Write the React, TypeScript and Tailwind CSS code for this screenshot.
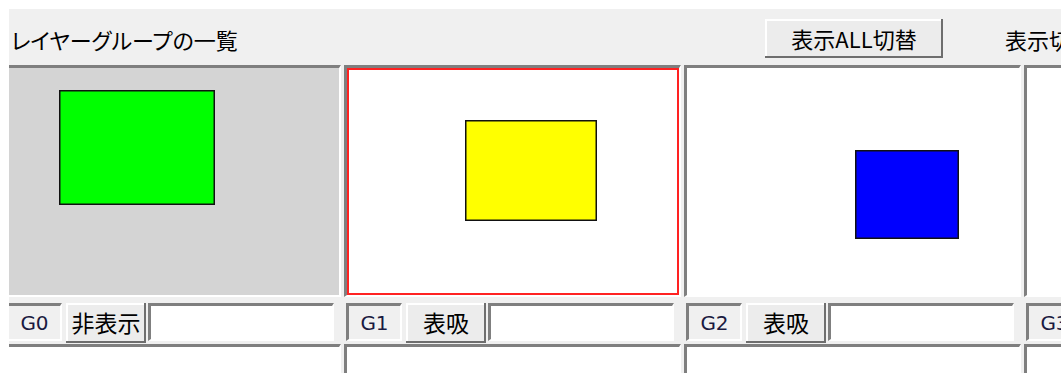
import React from "react";

interface LayerGroup {
  id: string;
  toggleLabel: string;
  bg: string;
  selected: boolean;
  shape: { x: number; y: number; w: number; h: number; fill: string };
}

const groups: LayerGroup[] = [
  {
    id: "G0",
    toggleLabel: "非表示",
    bg: "bg-[#d4d4d4]",
    selected: false,
    shape: { x: 52, y: 22, w: 156, h: 115, fill: "#00ff00" },
  },
  {
    id: "G1",
    toggleLabel: "表吸",
    bg: "bg-white",
    selected: true,
    shape: { x: 116, y: 50, w: 132, h: 101, fill: "#ffff00" },
  },
  {
    id: "G2",
    toggleLabel: "表吸",
    bg: "bg-white",
    selected: false,
    shape: { x: 168, y: 82, w: 104, h: 89, fill: "#0000ff" },
  },
  {
    id: "G3",
    toggleLabel: "表吸",
    bg: "bg-white",
    selected: false,
    shape: { x: 0, y: 0, w: 0, h: 0, fill: "none" },
  },
];

const jp = "font-['Noto_Sans_CJK_JP',sans-serif]";
const sunkenBorder =
  "border-t-[3px] border-l-[3px] border-b-2 border-r-2 border-t-[#7f7f7f] border-l-[#7f7f7f] border-b-white border-r-white";
const raised =
  "shadow-[inset_-2px_-2px_0_#6e6e6e,inset_2px_2px_0_#ffffff] bg-[#ececec]";

const GroupColumn: React.FC<{ group: LayerGroup }> = ({ group }) => {
  const { shape } = group;
  return (
    <div className="w-[337px] shrink-0 flex flex-col">
      {/* preview */}
      <div className={`h-[232px] ${sunkenBorder} ${group.bg}`}>
        <div
          className={`w-full h-full ${
            group.selected ? "border-2 border-[#ff2222]" : ""
          }`}
        >
          <svg className="block w-full h-full">
            {shape.w > 0 && (
              <rect
                x={shape.x + 0.75}
                y={shape.y + 0.75}
                width={shape.w - 1.5}
                height={shape.h - 1.5}
                fill={shape.fill}
                stroke="#111"
                strokeWidth={1.5}
              />
            )}
          </svg>
        </div>
      </div>

      {/* controls */}
      <div className="mt-[6px] h-[40px] flex items-start">
        <div
          className={`ml-[2px] w-[56px] h-[38px] shrink-0 ${sunkenBorder} border-b-[#f7f7f7] flex items-center justify-center font-['DejaVu_Sans',sans-serif] text-[20px] text-[#1a1a40]`}
        >
          {group.id}
        </div>
        <button
          className={`ml-[4px] w-[80px] h-[40px] shrink-0 ${raised} ${jp} text-[23px] leading-none text-black flex items-center justify-center pb-[2px]`}
        >
          {group.toggleLabel}
        </button>
        <input
          type="text"
          className={`ml-[2px] w-[186px] h-[38px] shrink-0 bg-white ${sunkenBorder} outline-none`}
        />
      </div>

      {/* next row */}
      <div className={`mt-[1px] h-[80px] bg-white ${sunkenBorder}`} />
    </div>
  );
};

export default function App() {
  return (
    <div className="w-[1061px] h-[373px] bg-white pl-[9px] pt-[9px] overflow-hidden">
      <div className="h-full bg-[#f0f0f0] flex flex-col overflow-hidden">
        <div className="h-[56px] shrink-0 flex items-start whitespace-nowrap">
          <div
            className={`w-[756px] shrink-0 pl-[2px] mt-[14px] ${jp} text-[22px] leading-[32px] text-black [font-feature-settings:'palt']`}
          >
            レイヤーグループの一覧
          </div>
          <button
            className={`mt-[10px] w-[178px] h-[39px] shrink-0 ${raised} ${jp} text-[22px] leading-none text-black flex items-center justify-center pb-[2px]`}
          >
            表示ALL切替
          </button>
          <div
            className={`ml-[62px] shrink-0 mt-[14px] ${jp} text-[22px] leading-[32px] text-black`}
          >
            表示切替
          </div>
        </div>

        <div className="flex-1 overflow-hidden">
          <div className="-ml-[5px] flex gap-[3px]">
            {groups.map((g) => (
              <GroupColumn key={g.id} group={g} />
            ))}
          </div>
        </div>
      </div>
    </div>
  );
}
